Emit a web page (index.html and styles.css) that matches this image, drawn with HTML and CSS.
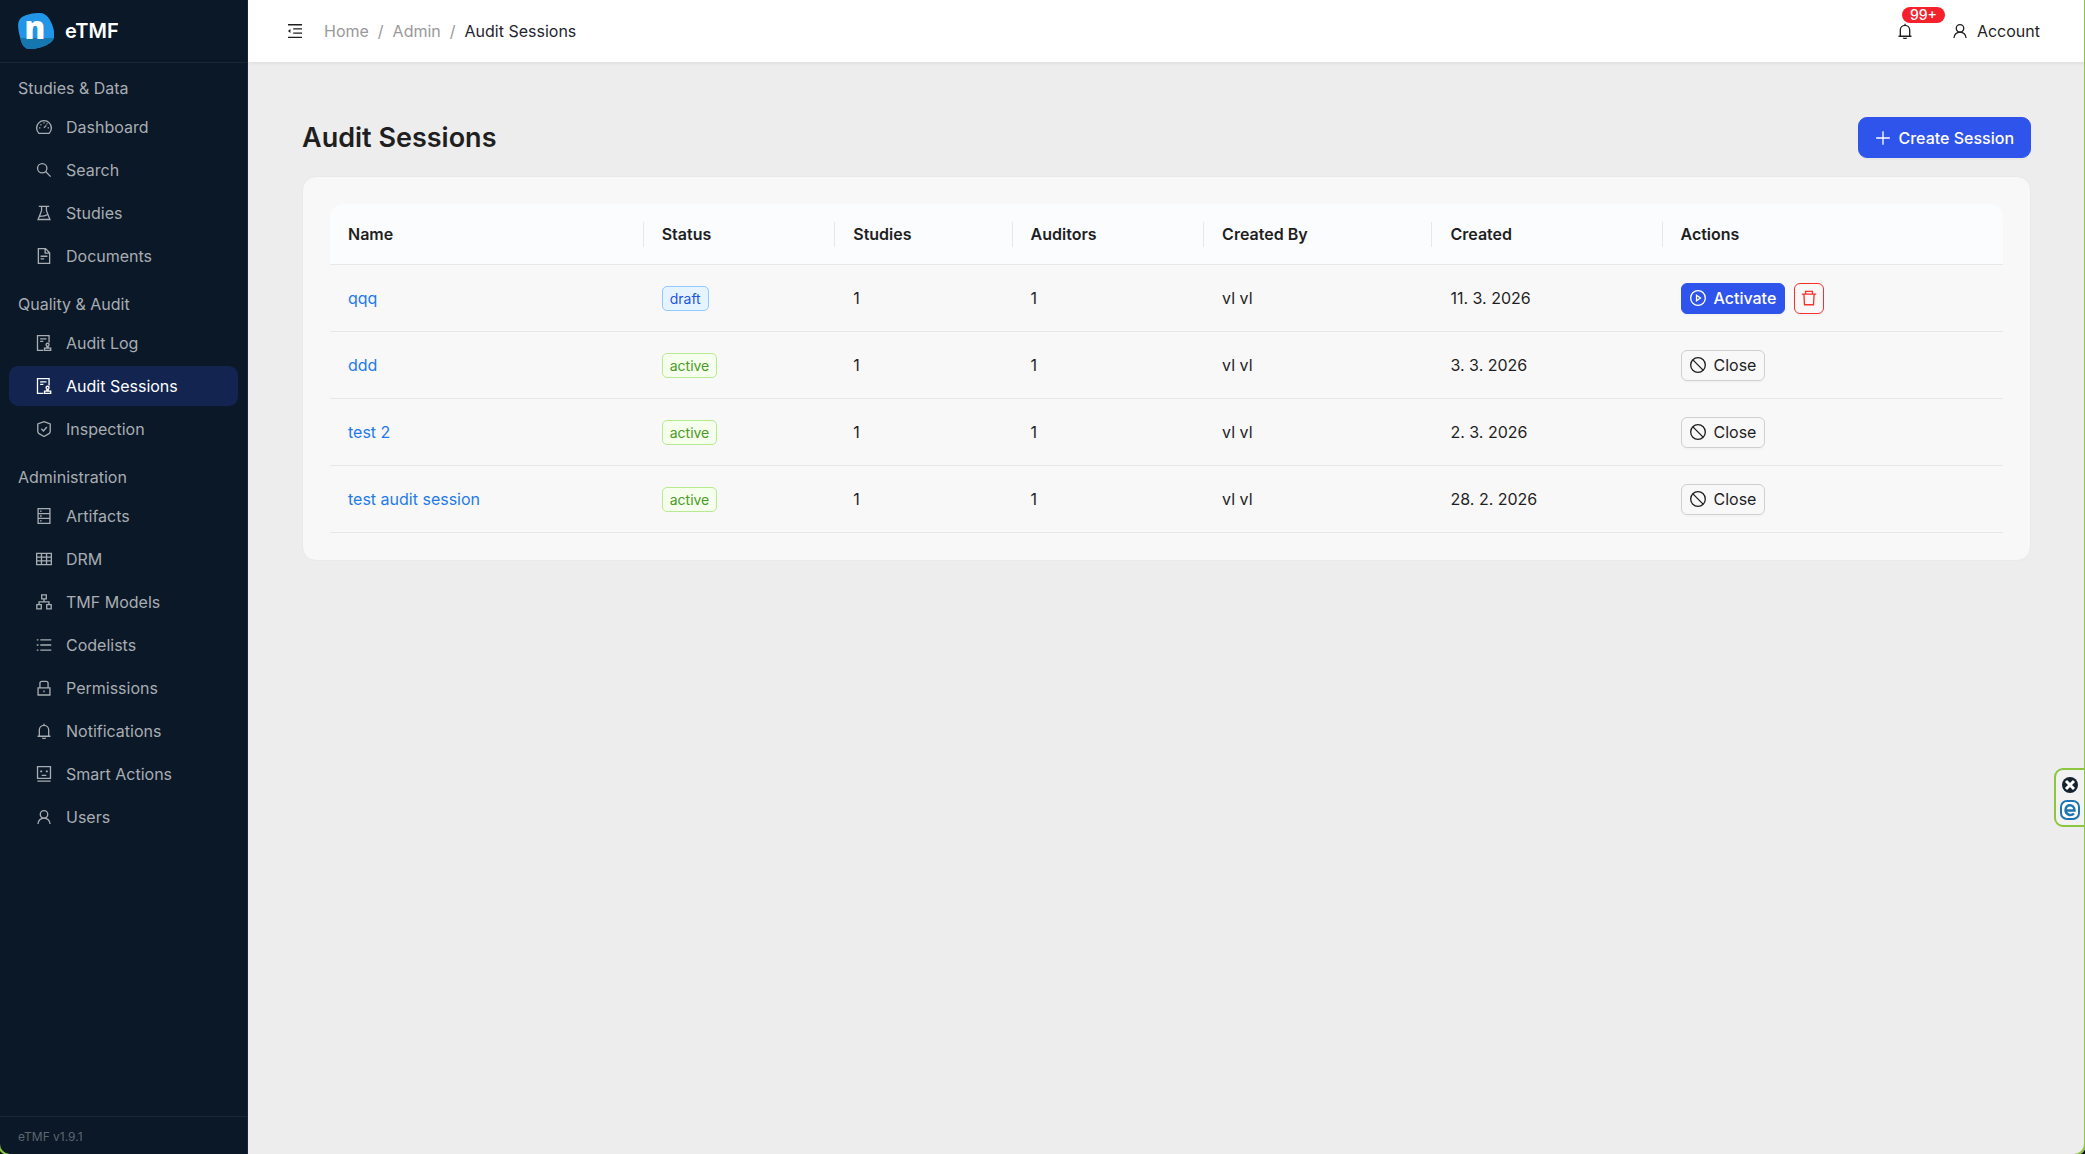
FILE: index.html
```html
<!DOCTYPE html>
<html lang="en">
<head>
<meta charset="utf-8">
<title>Audit Sessions - eTMF</title>
<meta name="viewport" content="width=device-width, initial-scale=1">
<link rel="stylesheet" href="styles.css">
</head>
<body>
<svg class="sprite" aria-hidden="true">
  <symbol id="i-dashboard" viewBox="64 64 896 896"><path d="M226 866A412 412 0 1 1 798 866Z"/><path d="M512 560L640 420M512 240v76M232 560h76M716 560h76M316 364l50 50M660 316l40 40"/></symbol>
  <symbol id="i-search" viewBox="64 64 896 896"><circle cx="412" cy="412" r="262"/><path d="M600 600l284 284"/></symbol>
  <symbol id="i-flask" viewBox="64 64 896 896"><path d="M220 140h584M376 140v240L180 876h664L648 380V140M270 700c120-60 200 60 440-100"/><path d="M500 480h24"/></symbol>
  <symbol id="i-file" viewBox="64 64 896 896"><path d="M196 100h400l232 232v592H196zM576 110v240h240M320 524h384M320 668h200"/></symbol>
  <symbol id="i-audit" viewBox="64 64 896 896"><path d="M480 924H148V100h648v380M296 280h352M296 424h180"/><circle cx="712" cy="610" r="84"/><path d="M676 700v70M748 700v70M540 924V800h348v124z"/></symbol>
  <symbol id="i-shield" viewBox="64 64 896 896"><path d="M512 104l348 120v430c0 50-30 90-70 120L512 930 234 774c-40-30-70-70-70-120V224zM360 500l120 120 190-220"/></symbol>
  <symbol id="i-database" viewBox="64 64 896 896"><path d="M180 100h664v824H180zM180 375h664M180 649h664M290 238h90M290 512h90M290 786h90"/></symbol>
  <symbol id="i-table" viewBox="64 64 896 896"><path d="M100 196h824v632H100zM100 406h824M100 617h824M370 196v632M655 196v632"/></symbol>
  <symbol id="i-cluster" viewBox="64 64 896 896"><path d="M384 110h256v230H384zM110 660h250v236H110zM664 660h250v236H664zM512 340v160M235 660V500h554v160"/></symbol>
  <symbol id="i-list" viewBox="64 64 896 896"><path d="M304 228h616M304 512h616M304 796h616M106 228h96M106 512h96M106 796h96"/></symbol>
  <symbol id="i-lock" viewBox="64 64 896 896"><path d="M180 500h664v404H180zM284 500V250c0-60 50-114 114-114h228c64 0 114 54 114 114v250M512 650v100"/></symbol>
  <symbol id="i-bell" viewBox="64 64 896 896"><path d="M512 110v80M250 800V460a262 262 0 0 1 524 0v340M150 806h724M420 890c30 60 154 60 184 0"/></symbol>
  <symbol id="i-robot" viewBox="64 64 896 896"><path d="M150 100h724v652H150zM140 912h744M380 590h264"/><path class="solid" d="M300 310h110v110H300zM614 310h110v110H614z"/></symbol>
  <symbol id="i-user" viewBox="64 64 896 896"><circle cx="512" cy="362" r="210"/><path d="M174 910a338 338 0 0 1 676 0"/></symbol>
  <symbol id="i-fold" viewBox="64 64 896 896"><path d="M120 160h784M412 394h492M412 630h492M120 864h784"/><path class="solid" d="M115 512l140-115v230z"/></symbol>
  <symbol id="i-plus" viewBox="64 64 896 896"><path d="M512 130v764M130 512h764"/></symbol>
  <symbol id="i-play" viewBox="64 64 896 896"><circle cx="512" cy="512" r="410"/><path d="M430 360l220 152-220 152z"/></symbol>
  <symbol id="i-trash" viewBox="64 64 896 896"><path d="M110 296h804M320 280V136h384v144M226 300l34 588h504l34-588"/></symbol>
  <symbol id="i-stop" viewBox="64 64 896 896"><circle cx="512" cy="512" r="410"/><path d="M226 226l572 572"/></symbol>
</svg>
<div class="app">
  <aside class="sidebar">
    <div class="brand">
      <svg class="logo" viewBox="0 0 36 36" aria-hidden="true">
        <defs><clipPath id="blob"><path d="M2 6C6 1 16 0 22 0c7 0 12 8 14 18 1 6 0 9-4 12-6 4-14 6-20 6-5 0-8-3-10-12C0 16-1 10 2 6z"/></clipPath></defs>
        <g clip-path="url(#blob)"><rect width="36" height="36" fill="#2196e8"/><rect y="25" width="36" height="11" fill="#1676ae"/></g>
        <text x="17" y="26" text-anchor="middle">n</text>
      </svg>
      <span>eTMF</span>
    </div>
    <nav class="nav">
      <h2>Studies &amp; Data</h2>
      <ul>
        <li><a href="#"><svg><use href="#i-dashboard"/></svg>Dashboard</a></li>
        <li><a href="#"><svg><use href="#i-search"/></svg>Search</a></li>
        <li><a href="#"><svg><use href="#i-flask"/></svg>Studies</a></li>
        <li><a href="#"><svg><use href="#i-file"/></svg>Documents</a></li>
      </ul>
      <h2>Quality &amp; Audit</h2>
      <ul>
        <li><a href="#"><svg><use href="#i-audit"/></svg>Audit Log</a></li>
        <li><a href="#" class="active" aria-current="page"><svg><use href="#i-audit"/></svg>Audit Sessions</a></li>
        <li><a href="#"><svg><use href="#i-shield"/></svg>Inspection</a></li>
      </ul>
      <h2>Administration</h2>
      <ul>
        <li><a href="#"><svg><use href="#i-database"/></svg>Artifacts</a></li>
        <li><a href="#"><svg><use href="#i-table"/></svg>DRM</a></li>
        <li><a href="#"><svg><use href="#i-cluster"/></svg>TMF Models</a></li>
        <li><a href="#"><svg><use href="#i-list"/></svg>Codelists</a></li>
        <li><a href="#"><svg><use href="#i-lock"/></svg>Permissions</a></li>
        <li><a href="#"><svg><use href="#i-bell"/></svg>Notifications</a></li>
        <li><a href="#"><svg><use href="#i-robot"/></svg>Smart Actions</a></li>
        <li><a href="#"><svg><use href="#i-user"/></svg>Users</a></li>
      </ul>
    </nav>
    <div class="version">eTMF v1.9.1</div>
  </aside>
  <div class="main">
    <header class="topbar">
      <button class="icon-btn" aria-label="Collapse menu"><svg><use href="#i-fold"/></svg></button>
      <nav class="crumbs" aria-label="Breadcrumb">
        <a href="#">Home</a><span>/</span><a href="#">Admin</a><span>/</span><b>Audit Sessions</b>
      </nav>
      <button class="icon-btn bell" aria-label="Notifications"><svg><use href="#i-bell"/></svg><span class="badge">99+</span></button>
      <button class="account"><svg><use href="#i-user"/></svg>Account</button>
    </header>
    <main class="content">
      <div class="page-head">
        <h1>Audit Sessions</h1>
        <button class="btn primary large"><svg><use href="#i-plus"/></svg>Create Session</button>
      </div>
      <section class="card">
        <table>
          <colgroup><col class="c-name"><col class="c-status"><col class="c-studies"><col class="c-auditors"><col class="c-by"><col class="c-created"><col></colgroup>
          <thead><tr><th>Name</th><th>Status</th><th>Studies</th><th>Auditors</th><th>Created By</th><th>Created</th><th>Actions</th></tr></thead>
          <tbody>
            <tr><td><a href="#">qqq</a></td><td><span class="tag draft">draft</span></td><td>1</td><td>1</td><td>vl vl</td><td>11. 3. 2026</td>
              <td><div class="actions"><button class="btn primary"><svg><use href="#i-play"/></svg>Activate</button><button class="btn danger" aria-label="Delete"><svg><use href="#i-trash"/></svg></button></div></td></tr>
            <tr><td><a href="#">ddd</a></td><td><span class="tag ok">active</span></td><td>1</td><td>1</td><td>vl vl</td><td>3. 3. 2026</td>
              <td><div class="actions"><button class="btn"><svg><use href="#i-stop"/></svg>Close</button></div></td></tr>
            <tr><td><a href="#">test 2</a></td><td><span class="tag ok">active</span></td><td>1</td><td>1</td><td>vl vl</td><td>2. 3. 2026</td>
              <td><div class="actions"><button class="btn"><svg><use href="#i-stop"/></svg>Close</button></div></td></tr>
            <tr><td><a href="#">test audit session</a></td><td><span class="tag ok">active</span></td><td>1</td><td>1</td><td>vl vl</td><td>28. 2. 2026</td>
              <td><div class="actions"><button class="btn"><svg><use href="#i-stop"/></svg>Close</button></div></td></tr>
          </tbody>
        </table>
      </section>
    </main>
  </div>
</div>
<div class="frame"></div>
<div class="widget">
  <button aria-label="Dismiss"><svg viewBox="0 0 20 20"><circle cx="10" cy="10" r="8" fill="#16212e"/><path d="M6 6l8 8M14 6l-8 8" stroke="#fff" stroke-width="3"/></svg></button>
  <button aria-label="Open extension"><svg viewBox="0 0 20 20"><rect x="1" y="1" width="18" height="18" rx="6" fill="#fff" stroke="#1c75b0" stroke-width="2"/><path d="M5.500 10.500H14.500C14.500 3.500 5.500 3.500 5.500 10C5.500 15.500 11.500 16 14 13.500" fill="none" stroke="#1c75b0" stroke-width="2.400"/></svg></button>
</div>
</body>
</html>
```

FILE: styles.css
```css
* { box-sizing: border-box; }
body {
  margin: 0;
  font: 16px/24px Inter, "Liberation Sans", sans-serif;
  color: #1f1f1f;
  background: #ededed;
}
h1, h2, ul { margin: 0; padding: 0; }
ul { list-style: none; }
a { text-decoration: none; }
button { font: inherit; color: inherit; background: none; border: 0; padding: 0; cursor: pointer; }
svg { width: 16px; height: 16px; flex: none; display: block; }
symbol { fill: none; stroke: currentColor; stroke-width: 74px; }
.solid { fill: currentColor; stroke: none; }
.sprite { position: absolute; width: 0; height: 0; }

.app { display: flex; min-height: 100vh; }

/* Sidebar */
.sidebar {
  width: 248px;
  flex: none;
  display: flex;
  flex-direction: column;
  background: #0b1827;
  border-right: 1px solid #1b2735;
  color: #a8adb3;
}
.brand {
  height: 63px;
  padding: 0 18px;
  display: flex;
  align-items: center;
  gap: 11px;
  border-bottom: 1px solid #1b2735;
  color: #fff;
  font-size: 20px;
  font-weight: 600;
}
.logo { width: 36px; height: 36px; overflow: visible; }
.logo text { font: 800 31px "Open Sans", sans-serif; fill: #fff; }
.nav { flex: 1; padding: 13px 9px; }
.nav h2 { font-size: 16px; line-height: 24px; font-weight: 400; padding: 0 9px; margin-bottom: 7px; }
.nav ul { display: grid; gap: 3px; margin-bottom: 16px; }
.nav a {
  height: 40px;
  padding: 0 27px;
  display: flex;
  align-items: center;
  gap: 14px;
  border-radius: 9px;
  color: inherit;
}
.nav a.active { background: #12244f; color: #fff; }
.version { border-top: 1px solid #1b2735; padding: 8px 18px 5px; font-size: 12px; color: #5c6670; }

/* Top bar */
.main { flex: 1; min-width: 0; }
.topbar {
  height: 62px;
  padding: 0 45px 0 39px;
  display: flex;
  align-items: center;
  background: #fff;
  box-shadow: 0 1px 4px rgba(0, 0, 0, .08);
}
.crumbs { display: flex; gap: 9px; margin-left: 21px; margin-right: auto; color: #999; }
.crumbs a { color: inherit; }
.crumbs b { font-weight: 400; color: #1f2530; }
.bell { position: relative; margin-right: 39px; }
.badge {
  position: absolute;
  left: 5px;
  top: -16px;
  width: 43px;
  height: 16px;
  border-radius: 8px;
  background: #f5222d;
  color: #fff;
  font-size: 14px;
  line-height: 15px;
  font-weight: 500;
}
.account { display: flex; align-items: center; gap: 9px; }

/* Page */
.content { padding: 55px 54px; }
.page-head { display: flex; justify-content: space-between; align-items: center; margin-bottom: 18px; }
h1 { font-size: 27px; line-height: 36px; font-weight: 600; }
.card { background: #f8f8f8; border: 1px solid #e9e9ea; border-radius: 14px; padding: 27px; }

table { width: 100%; table-layout: fixed; border-collapse: separate; border-spacing: 0; }
.c-name { width: 18.750%; }
.c-status { width: 11.450%; }
.c-studies { width: 10.600%; }
.c-auditors { width: 11.450%; }
.c-by { width: 13.650%; }
.c-created { width: 13.750%; }
th, td { padding: 0 18px; text-align: left; border-bottom: 1px solid #e6e7e9; }
th {
  height: 61px;
  font-weight: 600;
  background: linear-gradient(#e6e7e9, #e6e7e9) right center / 1px 25px no-repeat #fafcfe;
}
th:first-child { border-top-left-radius: 14px; }
th:last-child { border-top-right-radius: 14px; background: #fafcfe; }
td { height: 67px; }
td a { color: #1f7aec; }
.tag { display: inline-block; padding: 0 7px; border: 1px solid; border-radius: 5px; font-size: 14px; line-height: 23px; }
.draft { color: #1d55e0; background: #e6f4ff; border-color: #91caff; }
.ok { color: #4a9a24; background: #f6ffed; border-color: #b7eb8f; }

.actions { display: flex; gap: 9px; }
.btn {
  height: 31px;
  padding: 0 8px;
  display: flex;
  align-items: center;
  gap: 8px;
  border: 1px solid #cfcfd1;
  border-radius: 6px;
  box-shadow: 0 2px 0 rgba(0, 0, 0, .02);
}
.primary { background: #2f54eb; border-color: #2f54eb; color: #fff; font-weight: 500; }
.danger { width: 30px; padding: 0; justify-content: center; border-color: #f5322d; color: #f5322d; }
.large { height: 41px; padding: 0 16px; border-radius: 9px; }

/* Window outline and floating extension tab */
.frame {
  position: fixed;
  inset: -20px -1px -2px -2px;
  border: 2px solid #8cc63f;
  border-radius: 12px;
  box-shadow: 0 0 0 6px #0b1220;
  pointer-events: none;
}
.widget {
  position: fixed;
  right: 0;
  top: 768px;
  width: 31px;
  height: 59px;
  padding: 5px 0 0 4px;
  display: grid;
  gap: 5px;
  align-content: start;
  border: 2px solid #8cc63f;
  border-right-width: 1px;
  border-radius: 9px 0 0 9px;
  background: #f2f2f2;
}
.widget svg { width: 20px; height: 20px; }
```
